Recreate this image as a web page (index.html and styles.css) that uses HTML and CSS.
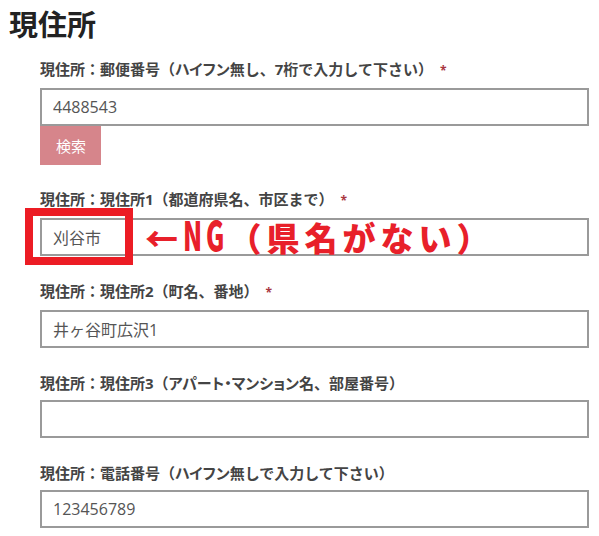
FILE: index.html
```html
<!DOCTYPE html>
<html lang="ja">
  <head>
    <meta charset="UTF-8" />
    <meta name="viewport" content="width=device-width, initial-scale=1.0" />
    <title>現住所</title>
    <link rel="stylesheet" href="styles.css">
  </head>
  <body>
    <div class="page">
      <h1 class="section-title">現住所</h1>

      <div class="field-list">
        <!-- Postal code + search -->
        <div class="field field-with-button">
          <label class="field-label" for="zip">現住所：郵便番号（<span class="kana">ハイフン</span>無し、7桁で入力して下さい）<span class="req">*</span></label>
          <input class="field-input" type="text" id="zip" value="4488543" />
          <button class="search-btn" type="button">検索</button>
        </div>

        <!-- Address 1 (annotated) -->
        <div class="field">
          <label class="field-label" for="addr1">現住所：現住所1（都道府県名、市区まで）<span class="req">*</span></label>
          <div class="field-control">
            <input class="field-input" type="text" id="addr1" value="刈谷市" />
            <div class="ng-frame"></div>
            <div class="ng-note">←<span class="ng">NG</span>（県名がない）</div>
          </div>
        </div>

        <!-- Address 2 -->
        <div class="field">
          <label class="field-label" for="addr2">現住所：現住所2（町名、番地）<span class="req">*</span></label>
          <input class="field-input" type="text" id="addr2" value="井ヶ谷町広沢1" />
        </div>

        <!-- Address 3 -->
        <div class="field">
          <label class="field-label" for="addr3">現住所：現住所3（<span class="kana">アパート・マンション</span>名、部屋番号）</label>
          <input class="field-input" type="text" id="addr3" value="" />
        </div>

        <!-- Phone -->
        <div class="field">
          <label class="field-label" for="tel">現住所：電話番号（<span class="kana">ハイフン</span>無しで入力して下さい）</label>
          <input class="field-input" type="text" id="tel" value="123456789" />
        </div>
      </div>
    </div>
  </body>
</html>
```

FILE: styles.css
```css
body {
  margin: 0;
  background-color: #ffffff;
  font-family: "Open Sans", "Noto Sans CJK JP", sans-serif;
  color: #444444;
}

.page {
  padding: 6px 10px 0 9px;
}

.section-title {
  margin: 0 0 17px;
  font-family: "Noto Sans CJK JP", sans-serif;
  font-size: 29px;
  line-height: 34px;
  font-weight: bold;
  color: #222222;
}

.field-list {
  padding-left: 31px;
}

.field {
  margin-bottom: 23px;
}

.field-with-button {
  margin-bottom: 22px;
}

.field-label {
  display: block;
  font-size: 15px;
  line-height: 24px;
  font-weight: bold;
  color: #444444;
  margin-bottom: 5px;
  white-space: nowrap;
}

/* katakana runs are set narrower in the original */
.kana {
  font-feature-settings: "palt";
}

.req {
  color: #a83640;
  font-size: 12px;
  margin-left: 7px;
}

.field-input {
  display: block;
  width: 100%;
  height: 38px;
  box-sizing: border-box;
  margin: 0;
  padding: 0 11px;
  border: 2px solid #9a9a9a;
  border-radius: 0;
  background-color: #ffffff;
  font-family: "Open Sans", "Noto Sans CJK JP", sans-serif;
  font-size: 16px;
  color: #555555;
  outline: none;
}

.search-btn {
  display: block;
  height: 39px;
  padding: 0 15px 0 16px;
  margin: 0;
  border: none;
  background-color: #d6858b;
  color: #ffffff;
  font-family: "Noto Sans CJK JP", sans-serif;
  font-size: 15px;
  cursor: pointer;
}

/* red annotation over the address field */
.field-control {
  position: relative;
}

.ng-frame {
  position: absolute;
  left: -15px;
  top: -10px;
  width: 108px;
  height: 57px;
  box-sizing: border-box;
  border: 8px solid #ec1c24;
}

.ng-note {
  position: absolute;
  left: 105px;
  top: 0;
  font-family: "Noto Sans CJK JP", sans-serif;
  font-size: 33px;
  line-height: 38px;
  font-weight: 900;
  color: #e8202a;
  letter-spacing: 5px;
  white-space: nowrap;
}

.ng {
  display: inline-block;
  transform: scale(0.76, 1.22);
  transform-origin: 0 88%;
  margin-right: -14px;
}
```
